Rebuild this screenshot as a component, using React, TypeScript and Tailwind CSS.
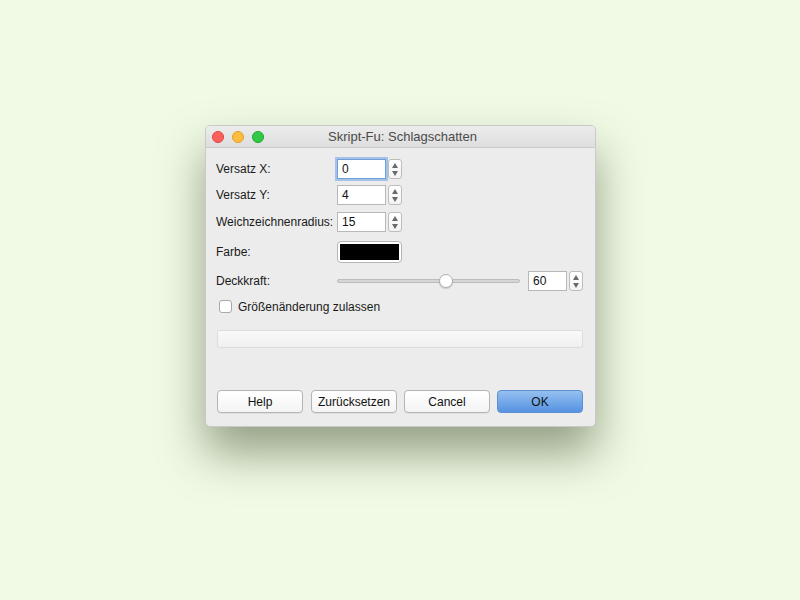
import React from "react";

const FONT = { fontFamily: '"Liberation Sans", Arial, sans-serif' };

function Stepper() {
  return (
    <div className="flex h-[20px] w-[14px] flex-col items-center justify-center gap-[3px] rounded-[3px] border border-[#bdbdbd] bg-gradient-to-b from-white to-[#f3f3f3]">
      <svg width="6" height="5" viewBox="0 0 6 5">
        <path d="M3 0 L6 5 L0 5 Z" fill="#6a6a6a" />
      </svg>
      <svg width="6" height="5" viewBox="0 0 6 5">
        <path d="M0 0 L6 0 L3 5 Z" fill="#6a6a6a" />
      </svg>
    </div>
  );
}

function SpinBox({ value, focused = false, width = "w-[49px]" }: { value: string; focused?: boolean; width?: string }) {
  return (
    <div className="flex items-center gap-[2px]">
      <div
        className={`flex h-[20px] ${width} items-center border bg-white pl-[4px] text-[12px] text-[#111] ${
          focused ? "border-[#6d9fdc] shadow-[0_0_0_2px_rgba(110,160,225,0.55)]" : "border-[#b8b8b8]"
        }`}
      >
        {value}
      </div>
      <Stepper />
    </div>
  );
}

function Row({ label, children, className }: { label: string; children: React.ReactNode; className: string }) {
  return (
    <div className={`flex items-center ${className}`}>
      <div className="w-[121px] text-[12px] text-[#1a1a1a]">{label}</div>
      {children}
    </div>
  );
}

function Button({ label, primary = false, className = "" }: { label: string; primary?: boolean; className?: string }) {
  return (
    <div
      className={`flex h-[23px] w-[86px] items-center justify-center rounded-[4px] border text-[12px] ${className} ${
        primary
          ? "border-[#5b8fd1] bg-gradient-to-b from-[#95c0f1] to-[#5592e0] text-[#111]"
          : "border-[#b4b4b4] bg-gradient-to-b from-white to-[#f4f4f4] text-[#111] shadow-[0_1px_0_rgba(0,0,0,0.06)]"
      }`}
    >
      {label}
    </div>
  );
}

export default function App() {
  return (
    <div className="flex h-[600px] w-[800px] bg-[#f0fae5] pl-[205px] pt-[125px]" style={FONT}>
      <div className="h-[302px] w-[391px] overflow-hidden rounded-[5px] border border-[#c9c9c9] bg-[#ececec] shadow-[0_26px_45px_rgba(60,70,40,0.5)]">
        {/* title bar */}
        <div className="relative flex h-[22px] items-center border-b border-[#cdcdcd] bg-gradient-to-b from-[#ececec] to-[#dedede]">
          <div className="flex gap-[8px] pl-[6px]">
            <span className="h-[12px] w-[12px] rounded-full border border-[#e0443e] bg-[#fc605b]" />
            <span className="h-[12px] w-[12px] rounded-full border border-[#dea123] bg-[#fdbc40]" />
            <span className="h-[12px] w-[12px] rounded-full border border-[#1aab29] bg-[#34c84a]" />
          </div>
          <div className="absolute inset-0 flex items-center justify-center pl-[4px] text-[13px] text-[#4a4a4a]">
            Skript-Fu: Schlagschatten
          </div>
        </div>

        {/* body */}
        <div className="px-[10px] pt-[11px]">
          <Row label="Versatz X:" className="h-[20px]">
            <SpinBox value="0" focused />
          </Row>
          <Row label="Versatz Y:" className="mt-[6px] h-[20px]">
            <SpinBox value="4" />
          </Row>
          <Row label="Weichzeichnenradius:" className="mt-[7px] h-[20px]">
            <SpinBox value="15" />
          </Row>
          <Row label="Farbe:" className="mt-[9px] h-[22px]">
            <div className="flex h-[22px] w-[65px] items-center justify-center rounded-[4px] border border-[#b4b4b4] bg-white">
              <div className="h-[16px] w-[59px] bg-black" />
            </div>
          </Row>
          <Row label="Deckkraft:" className="mt-[8px] h-[20px]">
            <div className="relative flex h-[20px] w-[183px] items-center">
              <div className="h-[4px] w-full rounded-full border border-[#bcbcbc] bg-[#d6d6d6]" />
              <div className="absolute left-[102px] top-[3px] h-[14px] w-[14px] rounded-full border border-[#b0b0b0] bg-white shadow-[0_1px_1px_rgba(0,0,0,0.15)]" />
            </div>
            <div className="ml-[8px]">
              <SpinBox value="60" width="w-[39px]" />
            </div>
          </Row>
          <div className="mt-[9px] flex h-[13px] items-center pl-[3px]">
            <div className="h-[13px] w-[13px] rounded-[3px] border border-[#a9a9a9] bg-white" />
            <span className="ml-[6px] text-[12px] text-[#1a1a1a]">Größenänderung zulassen</span>
          </div>
          <div className="ml-[1px] mt-[17px] h-[18px] w-[366px] rounded-[2px] border border-[#dcdcdc] bg-gradient-to-b from-[#f9f9f9] to-[#f0f0f0]" />
          <div className="ml-[1px] mt-[42px] flex gap-[7px]">
            <Button label="Help" />
            <Button label="Zurücksetzen" className="ml-[1px]" />
            <Button label="Cancel" />
            <Button label="OK" primary />
          </div>
        </div>
      </div>
    </div>
  );
}
